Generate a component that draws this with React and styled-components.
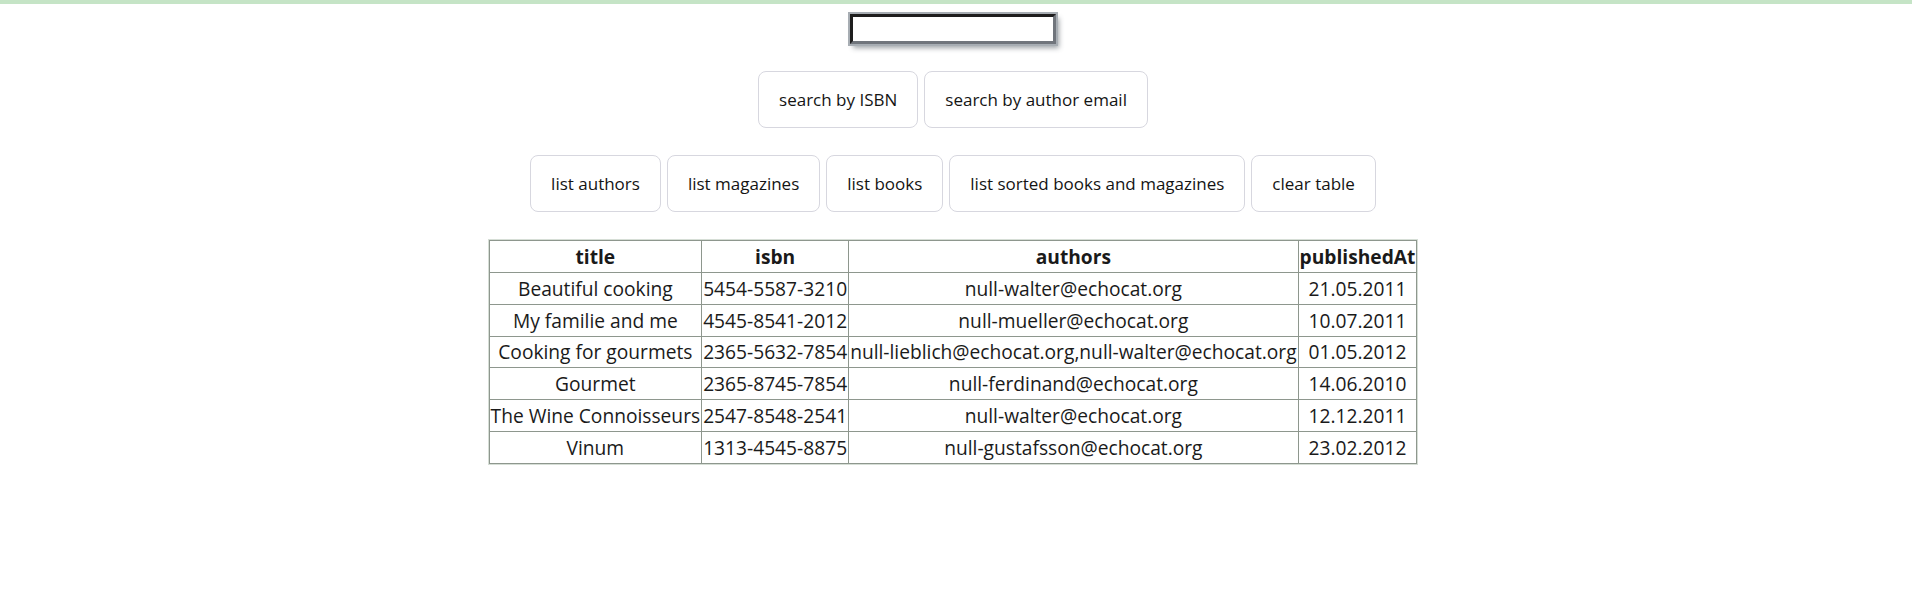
import React from 'react'
import styled, { createGlobalStyle } from 'styled-components'

const GlobalStyle = createGlobalStyle`
  body {
    margin: 0;
    background-color: #fff;
    font-family: "Open Sans", "Noto Sans", sans-serif;
    color: #1a1a1a;
  }
`;

const TopLine = styled.div`
  height: 4px;
  background-color: #c5e4c6;
`;

const Page = styled.div`
  display: flex;
  flex-direction: column;
  align-items: center;
  padding: 10px 6px 40px 0;
`;

const SearchInput = styled.input`
  box-sizing: border-box;
  width: 206px;
  height: 30px;
  margin: 0 0 27px 0;
  border: 3px solid;
  border-color: #1e1e1e #70757c #70757c #1e1e1e;
  outline: 2px solid #a7adb3;
  box-shadow: 3px 4px 5px rgba(40, 50, 60, 0.45);
  background-color: #fff;
`;

const ButtonRow = styled.div`
  display: flex;
  gap: 6px;
  margin-bottom: ${(p) => p.$space || 0}px;
`;

const Button = styled.button`
  height: 57px;
  padding: 0 20px;
  border: 1px solid #d7d7df;
  border-radius: 8px;
  background-color: #fff;
  color: #141414;
  font-family: "Open Sans", "Noto Sans", sans-serif;
  font-size: 17px;
  cursor: pointer;
`;

const Table = styled.table`
  border-collapse: collapse;
  box-shadow: 0 0 0 1px #d6ded6;
  font-size: 19.2px;
`;

const HeadCell = styled.th`
  height: 31px;
  padding: 0 1px;
  border: 1px solid #8e978e;
  font-weight: 700;
  text-align: center;
`;

const Cell = styled.td`
  height: 30.8px;
  padding: 0 1px;
  border: 1px solid #8e978e;
  text-align: ${(p) => p.$align || 'center'};
  white-space: nowrap;
`;

const rows = [
  ['Beautiful cooking', '5454-5587-3210', 'null-walter@echocat.org', '21.05.2011'],
  ['My familie and me', '4545-8541-2012', 'null-mueller@echocat.org', '10.07.2011'],
  ['Cooking for gourmets', '2365-5632-7854', 'null-lieblich@echocat.org,null-walter@echocat.org', '01.05.2012'],
  ['Gourmet', '2365-8745-7854', 'null-ferdinand@echocat.org', '14.06.2010'],
  ['The Wine Connoisseurs', '2547-8548-2541', 'null-walter@echocat.org', '12.12.2011'],
  ['Vinum', '1313-4545-8875', 'null-gustafsson@echocat.org', '23.02.2012'],
];

const App = () => {
  return (
    <>
      <GlobalStyle />
      <TopLine />
      <Page>
        <SearchInput type="text" />
        <ButtonRow $space={27}>
          <Button>search by ISBN</Button>
          <Button>search by author email</Button>
        </ButtonRow>
        <ButtonRow $space={28}>
          <Button>list authors</Button>
          <Button>list magazines</Button>
          <Button>list books</Button>
          <Button>list sorted books and magazines</Button>
          <Button>clear table</Button>
        </ButtonRow>
        <Table>
          <thead>
            <tr>
              <HeadCell>title</HeadCell>
              <HeadCell>isbn</HeadCell>
              <HeadCell>authors</HeadCell>
              <HeadCell>publishedAt</HeadCell>
            </tr>
          </thead>
          <tbody>
            {rows.map((r) => (
              <tr key={r[1]}>
                <Cell>{r[0]}</Cell>
                <Cell $align="left">{r[1]}</Cell>
                <Cell>{r[2]}</Cell>
                <Cell>{r[3]}</Cell>
              </tr>
            ))}
          </tbody>
        </Table>
      </Page>
    </>
  )
}

export default App
